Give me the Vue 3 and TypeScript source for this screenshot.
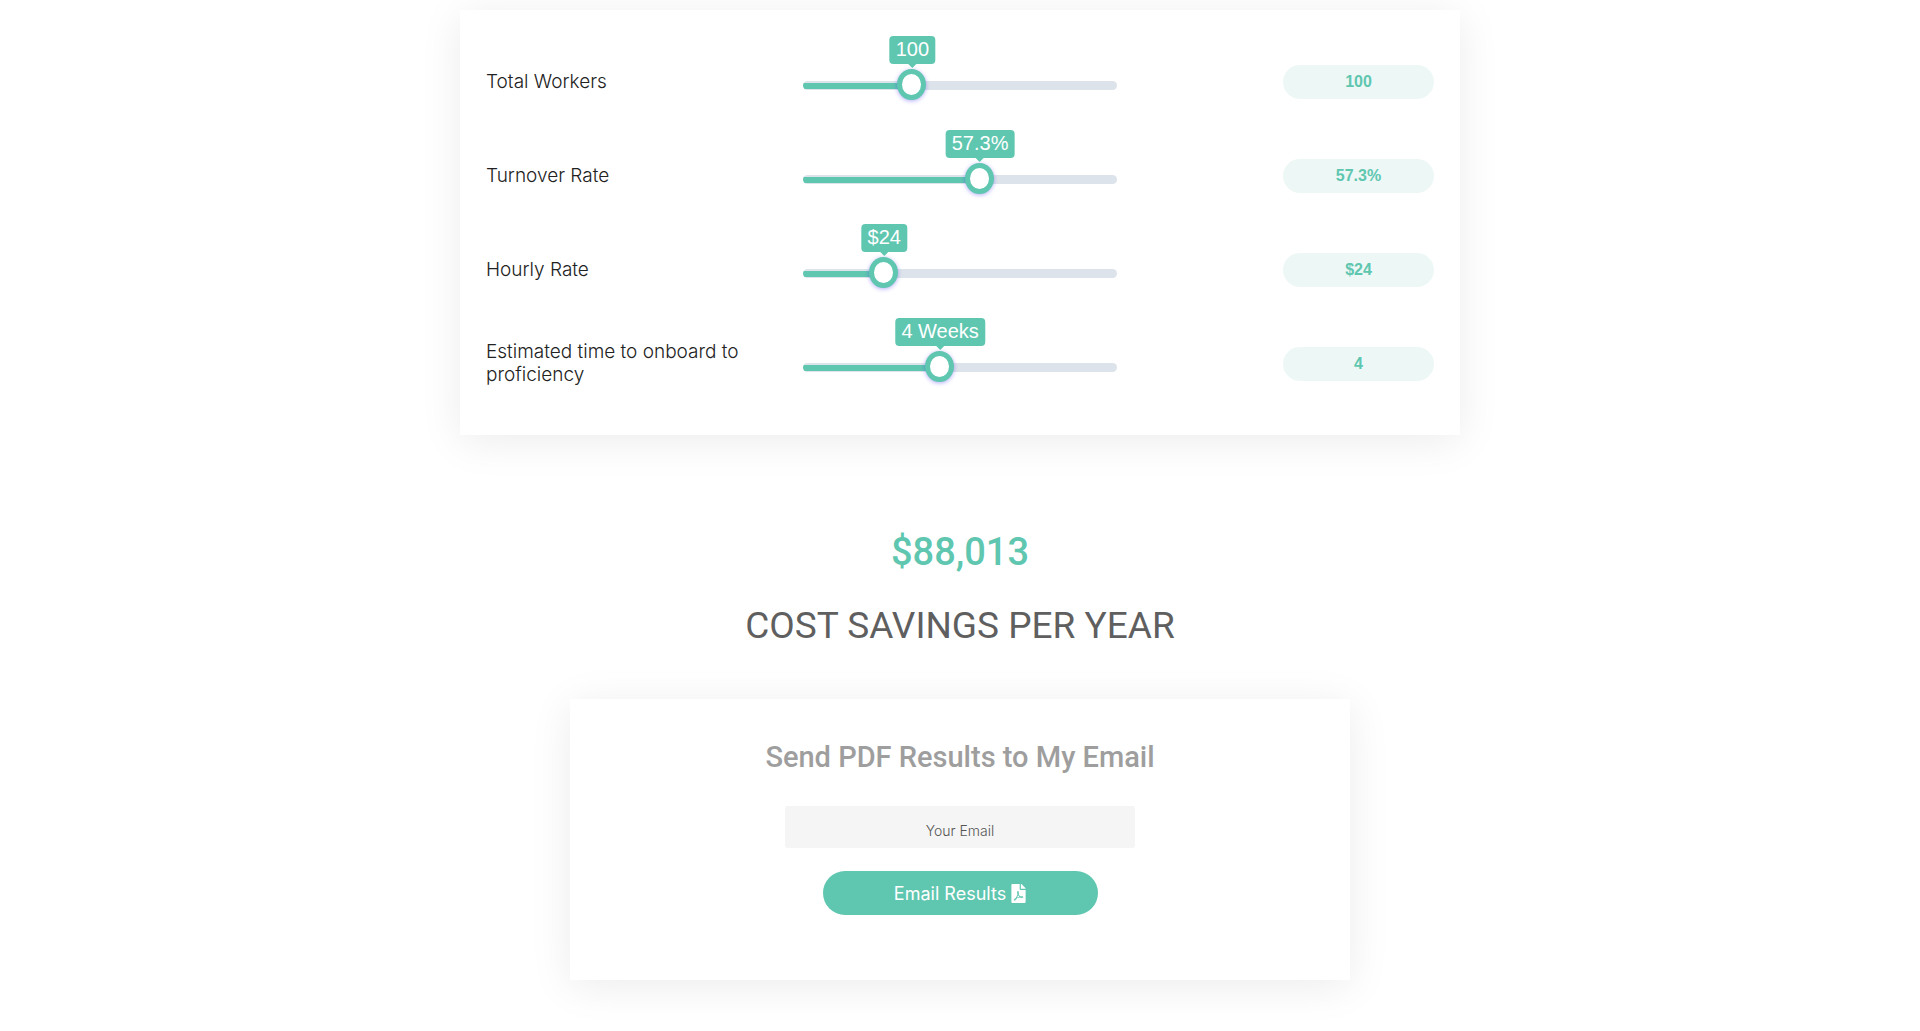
<script setup lang="ts">
import { reactive, ref } from 'vue'

interface Field {
  id: string
  label: string
  min: number
  max: number
  step: number
  value: number
  tip: (v: number) => string
  text: (v: number) => string
}

const fields = reactive<Field[]>([
  { id: 'workers', label: 'Total Workers', min: 1, max: 300, step: 1, value: 100, tip: (v) => `${v}`, text: (v) => `${v}` },
  { id: 'turnover', label: 'Turnover Rate', min: 1, max: 100, step: 0.1, value: 57.3, tip: (v) => `${v}%`, text: (v) => `${v}%` },
  { id: 'hourly', label: 'Hourly Rate', min: 1, max: 100, step: 1, value: 24, tip: (v) => `$${v}`, text: (v) => `$${v}` },
  { id: 'onboard', label: 'Estimated time to onboard to proficiency', min: 1, max: 8, step: 1, value: 4, tip: (v) => `${v} Weeks`, text: (v) => `${v}` },
])

const savings = ref('$88,013')
const email = ref('')

const ratio = (f: Field) => (f.value - f.min) / (f.max - f.min)
</script>

<template>
  <main class="page">
    <section class="card inputs">
      <div v-for="f in fields" :key="f.id" class="row">
        <label class="name" :for="f.id">{{ f.label }}</label>
        <div class="slider" :style="{ '--ratio': ratio(f) }">
          <output class="tip" :for="f.id">{{ f.tip(f.value) }}</output>
          <input :id="f.id" v-model.number="f.value" class="range" type="range" :min="f.min" :max="f.max" :step="f.step" />
        </div>
        <input class="pill" type="text" readonly :value="f.text(f.value)" :aria-label="f.label" />
      </div>
    </section>

    <section class="result">
      <p class="amount">{{ savings }}</p>
      <h1 class="caption">COST SAVINGS PER YEAR</h1>
    </section>

    <form class="card send" @submit.prevent>
      <h2 class="send-title">Send PDF Results to My Email</h2>
      <input v-model="email" class="email" type="email" placeholder="Your Email" aria-label="Your Email" />
      <button class="submit" type="submit">
        <span>Email Results</span>
        <svg class="icon" viewBox="0 0 384 512" aria-hidden="true">
          <path fill="currentColor" d="M181.9 256.1c-5-16-4.9-46.9-2-46.9 8.400 0 7.600 36.900 2 46.900zm-1.700 47.200c-7.700 20.200-17.300 43.300-28.400 62.700 18.300-7 39-17.200 62.900-21.900-12.700-9.600-24.900-23.400-34.500-40.800zM86.100 428.100c0 .8 13.200-5.400 34.900-40.200-6.700 6.300-29.100 24.500-34.900 40.200zM248 160h136v328c0 13.300-10.700 24-24 24H24c-13.300 0-24-10.700-24-24V24C0 10.700 10.700 0 24 0h200v136c0 13.200 10.800 24 24 24zm-8 171.800c-20-12.200-33.300-29-42.700-53.800 4.500-18.500 11.600-46.600 6.200-64.200-4.700-29.400-42.400-26.500-47.800-6.800-5 18.300-.4 44.100 8.100 77-11.600 27.600-28.700 64.600-40.800 85.800-.1 0-.1.1-.2.1-27.100 13.900-73.600 44.500-54.500 68 5.600 6.900 16 10 21.500 10 17.900 0 35.700-18 61.100-61.800 25.800-8.500 54.100-19.100 79-23.200 21.700 11.800 47.100 19.500 64 19.500 29.200 0 31.200-32 19.700-43.400-13.900-13.600-54.300-9.700-73.600-7.200zM377 105L279 7c-4.500-4.500-10.600-7-17-7h-6v128h128v-6.100c0-6.300-2.500-12.400-7-16.900zm-74.100 255.300c4.100-2.700-2.500-11.900-42.800-9 37.100 15.800 42.800 9 42.800 9z" />
        </svg>
      </button>
    </form>
  </main>
</template>

<style>
body {
  margin: 0;
  background: #fff;
}
</style>

<style scoped>
.page {
  box-sizing: border-box;
  display: flex;
  flex-direction: column;
  align-items: center;
  padding: 10px 16px 48px;
  font-family: Inter, "Liberation Sans", sans-serif;
  color: #222;
}

.card {
  box-sizing: border-box;
  width: 100%;
  background: #fff;
  box-shadow: 0 6px 40px rgba(0, 0, 0, 0.08);
}

.inputs {
  max-width: 1000px;
  padding: 25px 26px 24px;
}

.row {
  display: grid;
  grid-template-columns: repeat(3, 1fr);
  column-gap: 3px;
  align-items: center;
  height: 94px;
}

.name {
  padding-bottom: 2px;
  font-size: 19px;
  font-weight: 300;
  line-height: 23px;
}

.slider {
  position: relative;
  height: 31px;
  margin-top: 6px;
}

.range {
  display: block;
  width: 100%;
  height: 31px;
  margin: 0;
  appearance: none;
  background: none;
  cursor: pointer;
}

.range::-webkit-slider-runnable-track {
  height: 9px;
  border-radius: 5px;
  background:
    linear-gradient(#5fc6b0, #5fc6b0) left 2px / calc(15px + (100% - 29px) * var(--ratio)) 6px no-repeat,
    #dde3ea;
}

.range::-webkit-slider-thumb {
  box-sizing: border-box;
  width: 29px;
  height: 31px;
  margin-top: -12px;
  appearance: none;
  border: 5px solid #5fc6b0;
  border-radius: 50%;
  background: #fff;
  box-shadow: 0 1px 4px rgba(70, 50, 240, 0.4);
}

.tip {
  position: absolute;
  bottom: 37px;
  left: calc(15px + (100% - 29px) * var(--ratio));
  padding: 0 6px 1px;
  transform: translateX(-50%);
  border-radius: 4px;
  background: #5fc6b0;
  color: #fff;
  font-family: "Liberation Sans", Arial, sans-serif;
  font-size: 20px;
  line-height: 27px;
  white-space: nowrap;
}

.tip::after {
  content: "";
  position: absolute;
  top: 100%;
  left: 50%;
  transform: translateX(-50%);
  border: 4px solid transparent;
  border-top-color: #5fc6b0;
  border-bottom-width: 0;
}

.pill {
  box-sizing: border-box;
  justify-self: end;
  width: 151px;
  height: 34px;
  padding: 0 8px;
  border: 0;
  border-radius: 17px;
  background: #edf8f6;
  color: #5fc6b0;
  font-family: "Liberation Sans", Arial, sans-serif;
  font-size: 16px;
  font-weight: 700;
  text-align: center;
}

.result {
  padding: 93px 0 49px;
  text-align: center;
}

.amount,
.caption {
  margin: 0;
  font-family: Roboto, "Liberation Sans", sans-serif;
  font-size: 37px;
  line-height: 48px;
}

.amount {
  margin-bottom: 26px;
  color: #5fc6b0;
  font-size: 38px;
  font-weight: 500;
}

.caption {
  color: #5f5f5f;
  font-weight: 400;
}

.send {
  display: flex;
  flex-direction: column;
  align-items: center;
  max-width: 780px;
  padding: 40px 24px 65px;
}

.send-title {
  margin: 0 0 31px;
  color: #9e9e9e;
  font-family: Roboto, "Liberation Sans", sans-serif;
  font-size: 29px;
  font-weight: 500;
  line-height: 36px;
}

.email {
  box-sizing: border-box;
  width: 350px;
  max-width: 100%;
  height: 42px;
  margin-bottom: 23px;
  padding: 6px 12px 0;
  border: 0;
  border-radius: 3px;
  background: #f5f5f5;
  font-family: Inter, "Liberation Sans", sans-serif;
  font-size: 14px;
  font-weight: 300;
  text-align: center;
}

.email::placeholder {
  color: #555;
}

.submit {
  display: flex;
  align-items: center;
  justify-content: center;
  gap: 5px;
  width: 275px;
  height: 44px;
  border: 0;
  border-radius: 22px;
  background: #5fc6b0;
  color: #fff;
  font-family: Inter, "Liberation Sans", sans-serif;
  font-size: 18px;
  font-weight: 400;
  cursor: pointer;
}

.icon {
  width: 15px;
  height: 19px;
}
</style>
